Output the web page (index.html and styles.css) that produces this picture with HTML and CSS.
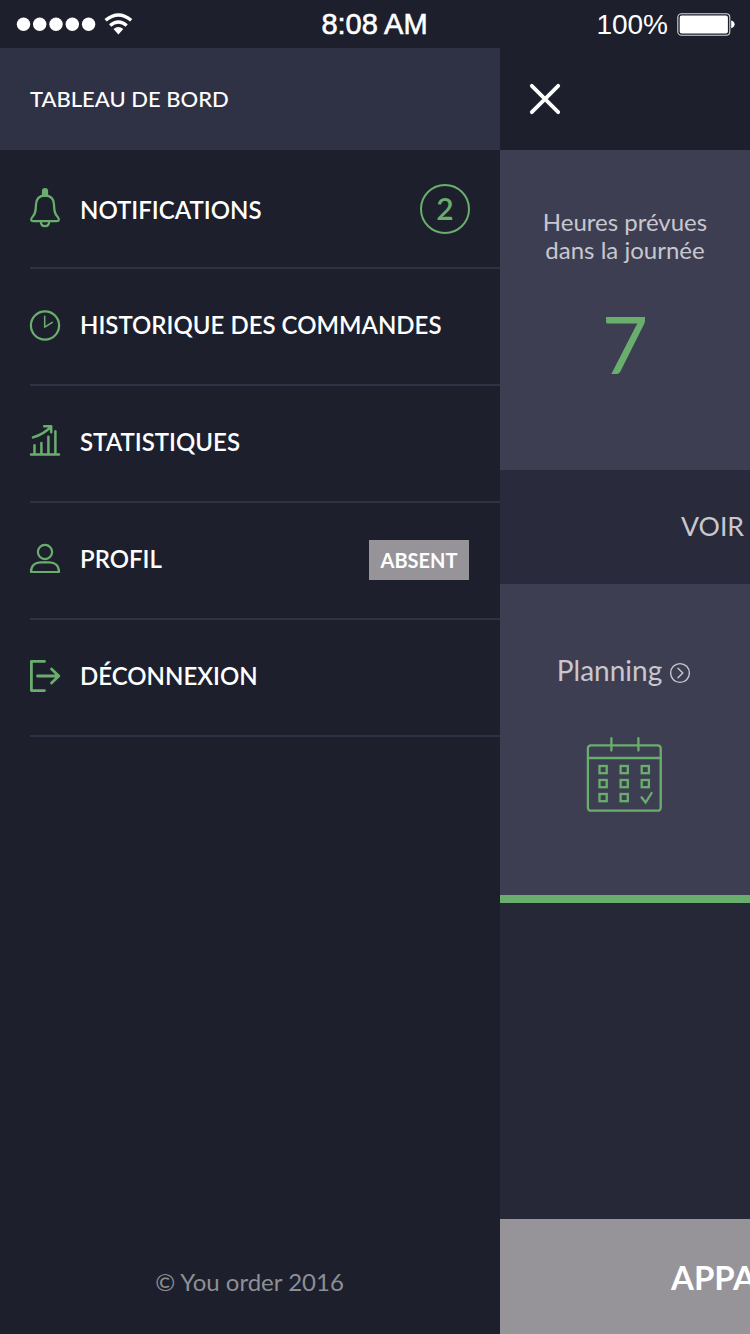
FILE: index.html
```html
<!DOCTYPE html>
<html lang="fr">
<head>
<meta charset="utf-8">
<title>Tableau de bord</title>
<link rel="stylesheet" href="styles.css">
</head>
<body>
<div class="app">
  <header class="status">
    <div class="status-left">
      <svg class="dots" width="80" height="14" viewBox="0 0 80 14"><g fill="#fff"><circle cx="7.5" cy="7.3" r="6.7"/><circle cx="23.7" cy="7.3" r="6.7"/><circle cx="40" cy="7.3" r="6.7"/><circle cx="56.3" cy="7.3" r="6.7"/><circle cx="72.6" cy="7.3" r="6.7"/></g></svg>
      <svg class="wifi" width="29" height="24" viewBox="0 0 29 24"><g fill="none" stroke="#fff" stroke-width="3.4"><path d="M1.6 8.2Q14.4 -2.2 27.2 8.2"/><path d="M6.1 13.5Q14.4 6.6 22.7 13.5"/></g><path d="M9.5 17Q14.4 12.8 19.3 17L14.4 22.5Z" fill="#fff"/></svg>
    </div>
    <div class="time">8:08 AM</div>
    <div class="status-right">
      <span class="percent">100%</span>
      <svg width="58" height="24" viewBox="0 0 58 24"><rect x=".8" y="1.8" width="52" height="21.4" rx="3.5" fill="none" stroke="#d5d6d9" stroke-width="1.1"/><rect x="2.7" y="3.6" width="48.2" height="17.8" rx="2" fill="#fff"/><path d="M54.2 8.5Q57.6 9.5 57.6 12.3T54.2 16.2Z" fill="#fff"/></svg>
    </div>
  </header>
  <div class="columns">
    <nav class="sidebar">
      <h1 class="title">TABLEAU DE BORD</h1>
      <ul class="menu">
        <li class="item first">
          <svg class="icon" viewBox="0 0 32 48"><path d="M14 10V5a2 2 0 0 1 4 0V10Z" fill="#6aae6e"/><path d="M16 9.6C10.5 9.6 7.2 13 7 18.5C6.8 24 6.8 27 3.7 30.6C1 33.6 2 35.2 4.2 35.2H27.8C30 35.2 31 33.6 28.3 30.6C25.2 27 25.2 24 25 18.5C24.8 13 21.5 9.6 16 9.6ZM11.8 35.6C12 41.6 20 41.6 20.2 35.6"/></svg>
          <span class="label">NOTIFICATIONS</span><span class="count">2</span>
        </li>
        <li class="item">
          <svg class="icon" viewBox="0 0 32 48"><circle cx="16" cy="24.5" r="14.1"/><path d="M15.7 15.2V26.2L23.3 21.4" stroke-width="1.5"/></svg>
          <span class="label">HISTORIQUE DES COMMANDES</span>
        </li>
        <li class="item">
          <svg class="icon" viewBox="0 0 32 48"><path d="M2 36.5H30M5.5 36V27.2M12.4 36V25M19.4 36V18.8M26.4 36V13.2M4 19.4Q15 16 21.8 8.8M15.2 8.2H22.2V14.2" stroke-width="2.5"/></svg>
          <span class="label">STATISTIQUES</span>
        </li>
        <li class="item">
          <svg class="icon" viewBox="0 0 32 48"><circle cx="16" cy="17" r="7.1"/><path d="M2 37C2 30.5 6 27.3 11.5 27.3H20.5C26 27.3 30 30.5 30 37Z"/></svg>
          <span class="label">PROFIL</span><span class="tag">ABSENT</span>
        </li>
        <li class="item">
          <svg class="icon" viewBox="0 0 32 48"><path d="M15.5 9.4H2.4V38.6H15.5M8.5 24H29.8M22.5 16.9L29.8 24L22.5 31.1" stroke-width="2.8"/></svg>
          <span class="label">DÉCONNEXION</span>
        </li>
      </ul>
      <footer class="copyright">© You order 2016</footer>
    </nav>
    <main class="board">
      <div class="close"><svg width="32" height="32" viewBox="0 0 32 32"><path d="M2.8 2.8L29.2 29.2M29.2 2.8L2.8 29.2" stroke="#fff" stroke-width="3.8" stroke-linecap="round"/></svg></div>
      <section class="hours"><p class="caption">Heures prévues<br>dans la journée</p><p class="number">7</p></section>
      <section class="see">VOIR</section>
      <section class="planning">
        <div class="planning-head"><span>Planning</span><svg width="22" height="22" viewBox="0 0 22 22"><g fill="none" stroke="#c8c7ce" stroke-width="1.4"><circle cx="11" cy="11" r="9.4"/><path d="M9 6.2L13.8 11L9 15.8" stroke-linecap="round" stroke-linejoin="round"/></g></svg></div>
        <svg class="calendar" width="76" height="76" viewBox="0 0 76 76"><g fill="none" stroke="#6aae6e" stroke-width="2.3"><rect x="1.9" y="8.3" width="72.8" height="65.4" rx="3"/><path d="M2 21H74.7M25.4 1.2V13.5M52.4 1.2V13.5" stroke-linecap="round"/><g stroke-width="2.3"><rect x="13.5" y="29" width="7.2" height="7.2"/><rect x="34.6" y="29" width="7.2" height="7.2"/><rect x="55.7" y="29" width="7.2" height="7.2"/><rect x="13.5" y="43" width="7.2" height="7.2"/><rect x="34.6" y="43" width="7.2" height="7.2"/><rect x="55.7" y="43" width="7.2" height="7.2"/><rect x="13.5" y="57" width="7.2" height="7.2"/><rect x="34.6" y="57" width="7.2" height="7.2"/><path d="M55.5 60.3L59.6 65.5L65.6 56" stroke-linecap="round"/></g></g></svg>
      </section>
      <div class="blank"></div>
      <section class="action">APPA</section>
    </main>
  </div>
</div>
</body>
</html>
```

FILE: styles.css
```css
* { box-sizing: border-box; }
body { margin: 0; background: #1d202c; font-family: Lato, "Open Sans", sans-serif; }
h1, p, ul { margin: 0; padding: 0; font-weight: 400; }
svg { display: block; flex: none; }
.app { width: 750px; height: 1334px; overflow: hidden; display: flex; flex-direction: column; color: #fff; }
.status { height: 48px; display: grid; grid-template-columns: 1fr auto 1fr; align-items: center; padding: 0 15px 0 16px; font: 28px/32px "Liberation Sans", Arial, sans-serif; }
.status-left { display: flex; align-items: center; gap: 8px; }
.time { font-size: 29px; letter-spacing: -.05px; padding-right: 2px; -webkit-text-stroke: .6px #fff; }
.status-right { display: flex; align-items: center; justify-content: flex-end; gap: 9px; }
.percent { padding-top: 1px; }
.columns { flex: 1; display: grid; grid-template-columns: 500px 250px; }
.sidebar { display: flex; flex-direction: column; }
.title { height: 102px; padding-left: 30px; background: #2f3145; font-size: 22px; line-height: 102px; font-weight: 500; }
.menu { list-style: none; padding-left: 30px; }
.item { height: 117px; display: flex; align-items: center; padding: 0 31px 3px 0; border-bottom: 2px solid #2f3145; }
.first { height: 119px; padding-bottom: 0; padding-top: 1px; padding-right: 30px; }
.icon { width: 32px; height: 48px; margin: 0 19px 0 -1px; fill: none; stroke: #6aae6e; stroke-width: 2.2; stroke-linecap: round; stroke-linejoin: round; }
.first .icon { margin-top: 1px; }
.label { font-size: 24px; line-height: 28px; font-weight: 600; white-space: nowrap; }
.first .label { margin-top: 2px; }
.count { margin-left: auto; width: 50px; height: 50px; border: 2px solid #6aae6e; border-radius: 50%; color: #6aae6e; font-size: 30px; line-height: 45px; font-weight: 600; text-align: center; }
.tag { margin: 2px 0 0 auto; width: 100px; height: 40px; background: #969499; font-size: 20px; line-height: 40px; font-weight: 700; text-align: center; }
.copyright { margin-top: auto; height: 105px; padding-right: 1px; line-height: 105px; text-align: center; font-size: 24px; color: #8e8f95; }
.board { display: flex; flex-direction: column; overflow: hidden; background: #262837; color: #c8c7ce; }
.close { height: 102px; padding-left: 29px; display: flex; align-items: center; background: #1d202c; }
.hours { height: 320px; padding-top: 58px; background: #3d3e52; text-align: center; }
.caption { font-size: 24px; line-height: 28px; }
.number { margin-top: 31px; font-size: 80px; line-height: 96px; color: #6aae6e; }
.see { height: 114px; padding-left: 181px; background: #292a3b; font-size: 26.7px; line-height: 113px; }
.planning { height: 319px; background: #3d3e52; border-bottom: 8px solid #6aae6e; padding: 69px 2px 0 0; display: flex; flex-direction: column; align-items: center; }
.planning-head { display: flex; align-items: center; gap: 7px; font-size: 28px; line-height: 34px; }
.planning-head svg { margin-top: 6px; }
.calendar { margin-top: 50px; }
.blank { flex: 1; }
.action { height: 115px; padding-left: 171px; background: #969499; color: #fff; font-size: 33px; line-height: 116px; font-weight: 700; white-space: nowrap; }
```
